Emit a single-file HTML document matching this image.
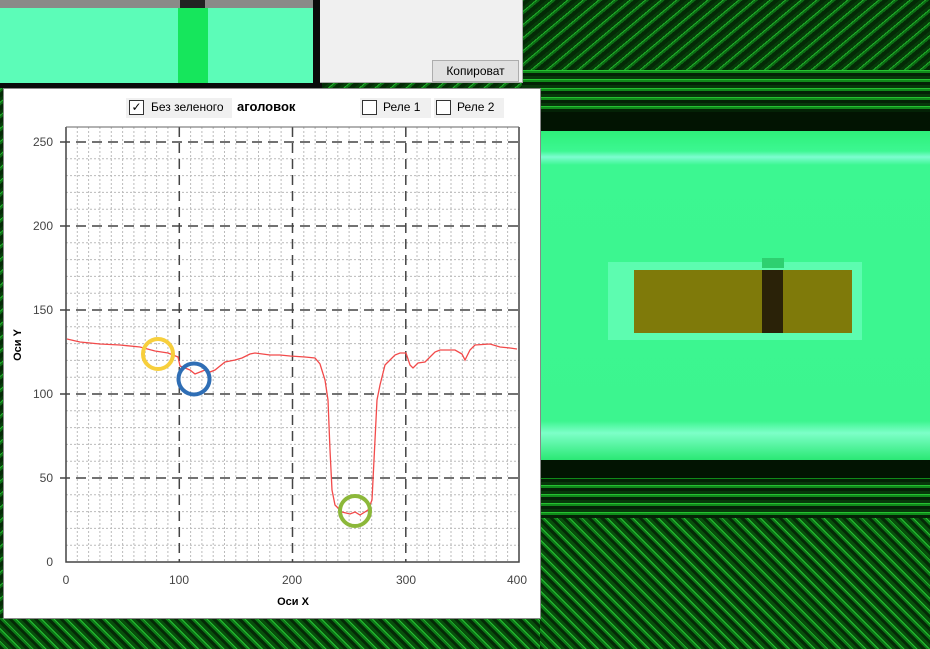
<!DOCTYPE html>
<html><head><meta charset="utf-8"><style>
html,body{margin:0;padding:0;width:930px;height:649px;overflow:hidden;background:#062a08;font-family:"Liberation Sans",sans-serif}
.abs{position:absolute}
.diag{background:repeating-linear-gradient(45deg,#042a06 0 3px,#0e7a18 3px 5px,#26c032 5px 6px,#08500c 6px 9px)}
.diag2{background:repeating-linear-gradient(-40deg,#042a06 0 4px,#0c6c14 4px 6px,#20b02a 6px 7px,#063c09 7px 10px)}
.hor{background:repeating-linear-gradient(0deg,#042206 0 3px,#108a1a 3px 5px,#26c032 5px 6px,#07380a 6px 9px)}
</style></head><body>
<div class="abs diag2" style="left:0;top:0;width:930px;height:649px"></div>
<div class="abs diag2" style="left:522px;top:0;width:408px;height:70px"></div>
<div class="abs hor" style="left:522px;top:70px;width:408px;height:42px"></div>
<div class="abs" style="left:540px;top:112px;width:390px;height:19px;background:#021402"></div>
<div class="abs" style="left:540px;top:460px;width:390px;height:18px;background:#021402"></div>
<div class="abs hor" style="left:540px;top:478px;width:390px;height:40px"></div>
<div class="abs diag" style="left:540px;top:518px;width:390px;height:131px"></div>
<div class="abs diag" style="left:0;top:618px;width:540px;height:31px"></div>
<!-- green tube -->
<div class="abs" style="left:540px;top:131px;width:390px;height:329px;background:linear-gradient(#2ef07a 0,#3cf791 20px,#7dfcd0 26px,#3cf791 34px,#3cf58f 290px,#7dffc8 302px,#2ae874 329px)"></div>
<div class="abs" style="left:608px;top:262px;width:254px;height:78px;background:#5dfcb0"></div>
<div class="abs" style="left:634px;top:270px;width:218px;height:63px;background:#7f7a0a"></div>
<div class="abs" style="left:762px;top:258px;width:22px;height:10px;background:#2ed070"></div>
<div class="abs" style="left:762px;top:270px;width:21px;height:63px;background:#2a2208"></div>
<!-- top left image -->
<div class="abs" style="left:0;top:0;width:313px;height:8px;background:#8a8a88"></div>
<div class="abs" style="left:180px;top:0;width:25px;height:8px;background:#222"></div>
<div class="abs" style="left:0;top:8px;width:313px;height:75px;background:#5cfcb8"></div>
<div class="abs" style="left:178px;top:8px;width:30px;height:75px;background:#16e65c"></div>
<div class="abs" style="left:313px;top:0;width:7px;height:85px;background:#0a0a0a"></div>
<div class="abs" style="left:0;top:83px;width:322px;height:5px;background:#0a0a0a"></div>
<!-- gray panel -->
<div class="abs" style="left:320px;top:0;width:202px;height:82px;background:#f0f0f0;border-right:1px solid #aaa;border-bottom:1px solid #aaa"></div>
<div class="abs" style="left:432px;top:60px;width:85px;height:20px;background:#e1e1e1;border:1px solid #adadad;font-size:12px;line-height:20px;text-align:center;color:#000">Копироват</div>
<!-- chart panel -->
<div class="abs" style="left:3px;top:88px;width:536px;height:529px;background:#fff;border:1px solid #888"></div>
<div class="abs" style="left:126px;top:98px;width:106px;height:20px;background:#f0f0f0"></div>
<div class="abs" style="left:129px;top:100px;width:13px;height:13px;border:1px solid #333;background:#fff;font-size:12px;line-height:13px;text-align:center">✓</div>
<div class="abs" style="left:151px;top:100px;font-size:12px;color:#000">Без зеленого</div>
<div class="abs" style="left:237px;top:99px;font-size:13px;font-weight:bold;color:#000">аголовок</div>
<div class="abs" style="left:360px;top:98px;width:71px;height:20px;background:#f0f0f0"></div>
<div class="abs" style="left:362px;top:100px;width:13px;height:13px;border:1px solid #333;background:#fff"></div>
<div class="abs" style="left:383px;top:100px;font-size:12px">Реле 1</div>
<div class="abs" style="left:434px;top:98px;width:70px;height:20px;background:#f0f0f0"></div>
<div class="abs" style="left:436px;top:100px;width:13px;height:13px;border:1px solid #333;background:#fff"></div>
<div class="abs" style="left:457px;top:100px;font-size:12px">Реле 2</div>
<svg class="abs" style="left:0;top:0" width="930" height="649" font-family="Liberation Sans" font-size="12">
<g stroke="#bbb" stroke-width="1" stroke-dasharray="2,2">
<path d="M77.3 127V562M88.6 127V562M99.9 127V562M111.3 127V562M122.6 127V562M133.9 127V562M145.2 127V562M156.6 127V562M167.9 127V562M190.6 127V562M201.9 127V562M213.2 127V562M224.5 127V562M235.8 127V562M247.2 127V562M258.5 127V562M269.8 127V562M281.1 127V562M303.8 127V562M315.1 127V562M326.4 127V562M337.8 127V562M349.1 127V562M360.4 127V562M371.7 127V562M383.1 127V562M394.4 127V562M417 127V562M428.4 127V562M439.7 127V562M451 127V562M462.3 127V562M473.7 127V562M485 127V562M496.3 127V562M507.6 127V562"/>
<path d="M66 545.2H519M66 528.4H519M66 511.6H519M66 494.8H519M66 461.2H519M66 444.4H519M66 427.6H519M66 410.8H519M66 377.2H519M66 360.4H519M66 343.6H519M66 326.8H519M66 293.2H519M66 276.4H519M66 259.6H519M66 242.8H519M66 209.2H519M66 192.4H519M66 175.6H519M66 158.8H519M66 127H519"/>
</g>
<g stroke="#444" stroke-width="1.5" stroke-dasharray="10,6">
<path d="M179.3 127V562M292.5 127V562M405.8 127V562"/>
<path d="M60 478H519M60 394H519M60 310H519M60 226H519M60 142H519"/>
</g>
<path d="M66 127V562H519V127" fill="none" stroke="#444" stroke-width="1.5"/>
<path d="M66 127H519" stroke="#666" stroke-width="1"/>
<g fill="#444" font-size="12" text-anchor="end">
<text x="53" y="566">0</text><text x="53" y="482">50</text><text x="53" y="398">100</text><text x="53" y="314">150</text><text x="53" y="230">200</text><text x="53" y="146">250</text>
</g>
<g fill="#444" text-anchor="middle">
<text x="66" y="584">0</text><text x="179" y="584">100</text><text x="292" y="584">200</text><text x="406" y="584">300</text><text x="517" y="584">400</text>
</g>
<text x="293" y="605" text-anchor="middle" font-weight="bold" font-size="11">Оси X</text>
<text transform="translate(21,345) rotate(-90)" text-anchor="middle" font-weight="bold" font-size="11">Оси Y</text>
<polyline fill="none" stroke="#f24a4a" stroke-width="1.3" points="67,339 80,342 100,344 120,345 140,347 155,351 168,353 178,357 180,366 190,370 195,374 200,372 205,370 210,372 215,370 225,362 235,360 242,358 250,354 255,353 270,355 280,355 290,356 305,357 315,358 320,364 325,380 328,400 330,450 332,490 335,505 342,512 350,514 355,512 360,515 368,510 372,500 375,440 377,400 380,385 385,365 390,360 395,355 400,353 406,353 410,365 413,368 418,363 425,362 430,357 435,352 440,350 455,350 462,354 465,360 470,350 475,345 490,344 500,347 510,348 517,349"/>
<circle cx="158" cy="354" r="15" fill="none" stroke="#f7cf3c" stroke-width="4"/>
<circle cx="194" cy="379" r="15.5" fill="none" stroke="#2f6eb5" stroke-width="4"/>
<circle cx="355" cy="511" r="15" fill="none" stroke="#8cb83a" stroke-width="4"/>
</svg>
</body></html>
